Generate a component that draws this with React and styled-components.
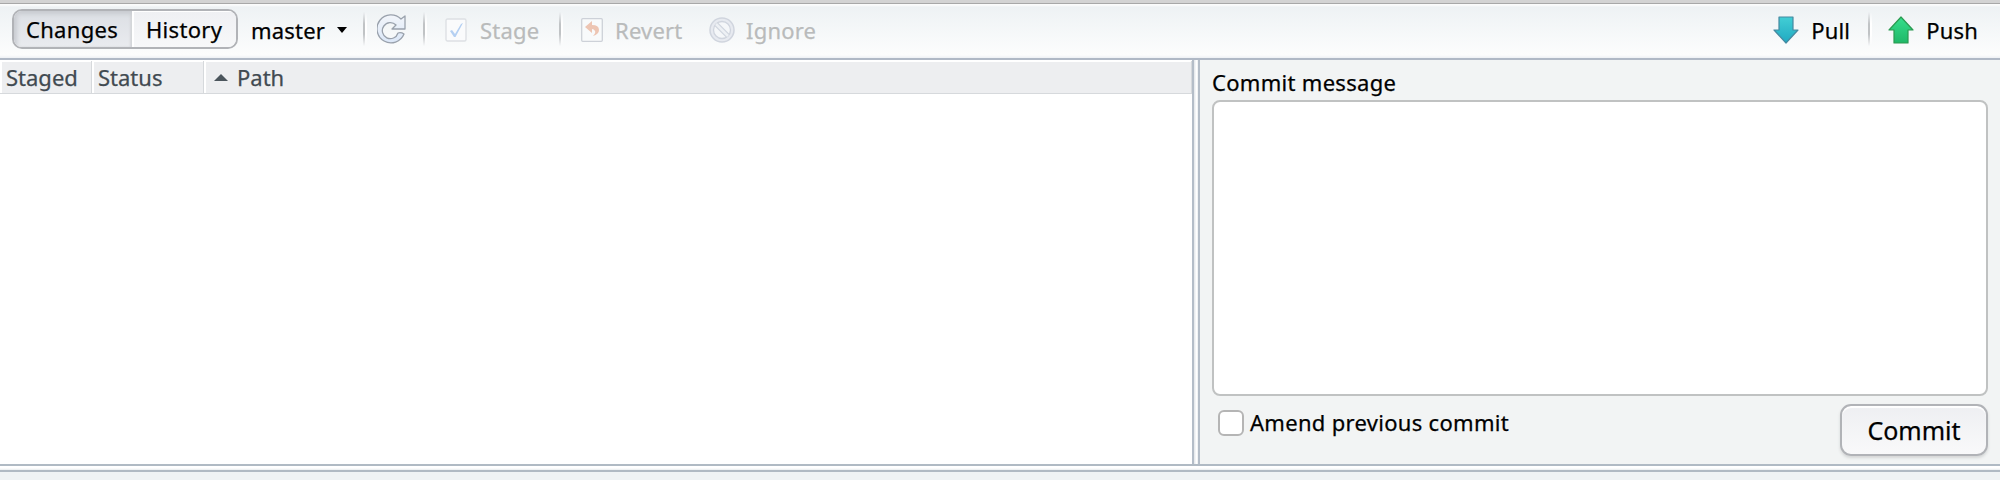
import React from "react";
import styled, { createGlobalStyle } from "styled-components";

const Global = createGlobalStyle`
  * { box-sizing: border-box; }
  body { margin: 0; overflow: hidden; font: 22px/30px "Noto Sans", sans-serif; color: #000; background: #eff3f5; }
  button, textarea, input { font: inherit; color: inherit; margin: 0; }
`;
const Window = styled.div`
  width: 2000px; height: 480px; display: flex; flex-direction: column; background: #eff3f5;
`;
const Toolbar = styled.header`
  height: 60px; flex: none; display: flex; align-items: flex-start; padding: 5px 22px 0 12px;
  border-top: 3px solid #d3d3d3; border-bottom: 2px solid #b0b9c6;
  background: linear-gradient(#a8a8a8 0 1px, #fbfcfc 1px 2px, #eef2f4 4px, #fcfdfd 52px, #eef1f5 55px);
`;
const Segments = styled.div`
  display: flex; width: 226px; height: 40px; margin-top: 1px; border: 2px solid #b1b3b7; border-radius: 10px; overflow: hidden;
`;
const Segment = styled.button`
  width: ${(p) => p.$w}px; height: 36px; border: 0; padding: 0 0 0 ${(p) => p.$pad}px; text-align: left;
  letter-spacing: .3px; line-height: 36px; -webkit-text-stroke: .25px;
  background: ${(p) => (p.$active ? "linear-gradient(#dcdfe4, #e9ebef)" : "linear-gradient(#eff0f3, #f7f8f9)")};
  box-shadow: ${(p) => (p.$active ? "inset 3px 3px 4px #c8cbd0, inset -2px 0 2px #d4d6da" : "inset 2px 1px 0 #fff")};
`;
const Tool = styled.button`
  display: flex; align-items: center; border: 0; background: none; padding: 0; height: 40px; margin: 2px 0 0 ${(p) => p.$ml || 0}px;
  color: ${(p) => (p.$off ? "#b9bbbb" : "#000")}; letter-spacing: ${(p) => p.$ls ?? 0.2}px; gap: ${(p) => p.$gap || 0}px;
  -webkit-text-stroke: .25px; width: ${(p) => (p.$w ? p.$w + "px" : "auto")};
  svg { flex: none; display: block; }
`;
const Divider = styled.i`
  width: 4px; height: 34px; flex: none; margin: 4px 0 0 ${(p) => p.$ml || 0}px;
  background: linear-gradient(90deg, #c0c3c5 50%, #fff 50%);
  mask-image: linear-gradient(transparent, #000 35%, #000 65%, transparent);
`;
const Spacer = styled.div`flex: 1;`;
const Main = styled.main`
  display: flex; height: 404px; flex: none;
`;
const FileList = styled.section`
  width: 1192px; background: #fff;
`;
const HeadRow = styled.div`
  display: flex; height: 34px; padding-top: 1px; border-bottom: 0;
`;
const HeadCell = styled.div`
  width: ${(p) => p.$w}px; height: 33px; display: flex; align-items: center; padding-left: ${(p) => p.$pad}px; gap: 9px;
  color: #414a51; background: #edeef0; border: 0 solid #d6d9dc; border-width: 0 1px 1px 0;
  box-shadow: inset 2px 1px 0 #fff; -webkit-text-stroke: .25px; letter-spacing: ${(p) => p.$ls || 0}px;
`;
const Splitter = styled.div`
  width: 8px; background: linear-gradient(90deg, #b4bdc8 0 2px, #e8ebee 2px 3px, #fff 4px 5px, #e4e8eb 6px, #b4bdc8 6px 8px);
`;
const BottomSplitter = styled.div`
  height: 8px; flex: none; background: linear-gradient(#b0bac4 0 2px, #fff 2px 4px, #e9edef 6px, #b0bac4 6px 8px);
`;
const CommitPane = styled.section`
  width: 800px; background: #f2f4f4; padding: 7px 12px 0; display: flex; flex-direction: column;
`;
const Label = styled.label`
  display: flex; align-items: flex-start; letter-spacing: ${(p) => p.$ls}px; height: ${(p) => p.$h}px; -webkit-text-stroke: .25px;
`;
const Message = styled.textarea`
  display: block; width: 776px; height: 296px; border: 2px solid #c0c2c2; border-radius: 8px; background: #fff; resize: none; outline: 0;
`;
const Footer = styled.div`
  display: flex; justify-content: space-between; padding: 8px 0 0 6px;
`;
const Check = styled.input`
  appearance: none; width: 26px; height: 26px; border: 2px solid #b5b5b5; border-radius: 6px; background: #fff; margin: 6px 6px 0 0;
`;
const Caption = styled.span`margin-top: 3px;`;
const CommitButton = styled.button`
  width: 148px; height: 52px; border: 2px solid #b1b3b7; border-radius: 11px; font-size: 25px; padding: 0; line-height: 46px;
  background: linear-gradient(#eeeff2, #f9f9fa); box-shadow: inset 0 2px 1px #fff, 0 2px 3px #d4d6d6; -webkit-text-stroke: .25px;
`;

const Refresh = () => (
  <svg width="30" height="32" viewBox="0 0 30 32">
    <defs><linearGradient id="rf" x2="0" y2="1"><stop stopColor="#f2f5fa" /><stop offset="1" stopColor="#dbe7f8" /></linearGradient></defs>
    <path d="M28 2v13H15l4-4a8 8 0 1 0 2 8q3-1 6 1A14 14 0 1 1 24 5z" fill="url(#rf)" stroke="#99a1ac" strokeWidth="1.3" strokeLinejoin="round" />
  </svg>
);
const StageIcon = () => (
  <svg width="22" height="24"><rect x="1" y="1" width="20" height="22" rx="1.5" fill="#fafbfc" stroke="#dde0e4" strokeWidth="1.4" /><path d="M5 13l2-1 3 4 6-10 2-1-7.500 14H9z" fill="#b5d0f2" /></svg>
);
const RevertIcon = () => (
  <svg width="22" height="24"><rect x=".7" y=".7" width="20.600" height="22.600" rx="1" fill="#f8fafb" stroke="#cdd1d8" strokeWidth="1.3" /><path d="M4 9l7-6v4q7 0 7 5 0 4-6 6 3-3 2-5-1-2-3-2v4z" fill="#edc5b3" /></svg>
);
const IgnoreIcon = () => (
  <svg width="26" height="26" fill="none" stroke="#d0d5de"><circle cx="13" cy="13" r="12" strokeWidth="1.5" fill="#e7eaf0" /><circle cx="13" cy="13" r="8.500" strokeWidth="1.3" fill="#f5f7f9" /><path d="M7 7l12 12" strokeWidth="5" /><path d="M7 7l12 12" stroke="#edf0f4" strokeWidth="2.500" /></svg>
);
const Arrow = ({ up }) => (
  <svg width="26" height="28" viewBox="0 0 26 28">
    <defs><linearGradient id={up ? "up" : "down"} x2="0" y2="1"><stop stopColor={up ? "#35df8c" : "#42ced5"} /><stop offset="1" stopColor={up ? "#20b868" : "#20a9c1"} /></linearGradient></defs>
    <path d={up ? "M13 1L25 14H20V27H6V14H1z" : "M6 1H20V14H25L13 27 1 14H6z"} fill={`url(#${up ? "up" : "down"})`} stroke={up ? "#2a9a50" : "#4589a0"} strokeWidth="1.2" strokeLinejoin="round" />
  </svg>
);
const Caret = ({ up }) => (
  <svg width={up ? 14 : 10} height={up ? 7 : 6} viewBox="0 0 14 7" preserveAspectRatio="none"><path d={up ? "M0 7L7 0l7 7z" : "M0 0h14L7 7z"} fill={up ? "#4b555c" : "#000"} /></svg>
);

export default function App() {
  return (
    <Window>
      <Global />
      <Toolbar>
        <Segments>
          <Segment $active $w={118} $pad={12}>Changes</Segment>
          <Segment $w={104} $pad={14}>History</Segment>
        </Segments>
        <Tool $ml={13} $w={112} $gap={12}>master<Caret /></Tool>
        <Divider />
        <Tool $ml={10} $w={46}><Refresh /></Tool>
        <Divider />
        <Tool $off $ml={18} $w={114} $gap={13}><StageIcon />Stage</Tool>
        <Divider />
        <Tool $off $ml={18} $w={128} $gap={12}><RevertIcon />Revert</Tool>
        <Tool $off $gap={11}><IgnoreIcon />Ignore</Tool>
        <Spacer />
        <Tool $w={95} $gap={12}><Arrow />Pull</Tool>
        <Divider />
        <Tool $ml={16} $gap={12}><Arrow up />Push</Tool>
      </Toolbar>
      <Main>
        <FileList>
          <HeadRow>
            <HeadCell $w={92} $pad={6}>Staged</HeadCell>
            <HeadCell $w={112} $pad={6}>Status</HeadCell>
            <HeadCell $w={988} $pad={10}><Caret up />Path</HeadCell>
          </HeadRow>
        </FileList>
        <Splitter />
        <CommitPane>
          <Label htmlFor="message" $h={33} $ls={0.3}>Commit message</Label>
          <Message id="message" />
          <Footer>
            <Label $h={34} $ls={0.3}><Check type="checkbox" /><Caption>Amend previous commit</Caption></Label>
            <CommitButton>Commit</CommitButton>
          </Footer>
        </CommitPane>
      </Main>
      <BottomSplitter />
    </Window>
  );
}
